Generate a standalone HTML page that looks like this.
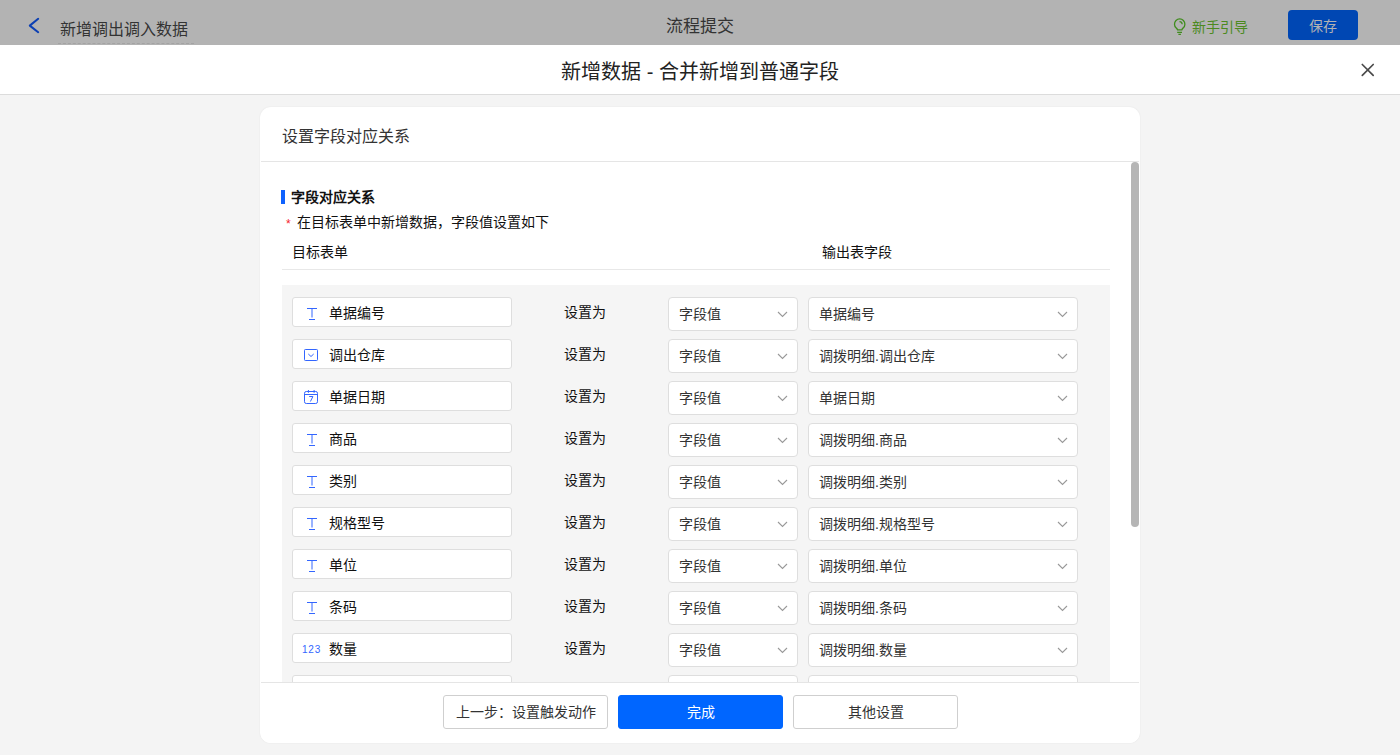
<!DOCTYPE html>
<html lang="zh-CN">
<head>
<meta charset="utf-8">
<style>
*{margin:0;padding:0;box-sizing:border-box;}
html,body{width:1400px;height:755px;overflow:hidden;background:#f4f4f4;font-family:"Liberation Sans",sans-serif;color:#333;}
.abs{position:absolute;}
#topbar{position:absolute;left:0;top:0;width:1400px;height:45px;background:#b3b3b3;}
#topbar .back{position:absolute;left:27px;top:16px;}
#topbar .name{position:absolute;left:60px;top:20px;font-size:16px;line-height:20px;color:#333;white-space:nowrap;}
#topbar .dash{position:absolute;left:58px;top:43px;width:136px;height:1px;border-top:1px dashed #a3a3a3;}
#topbar .mid{position:absolute;left:0;width:1400px;top:17px;text-align:center;font-size:17px;line-height:20px;color:#333;}
#topbar .guide{position:absolute;left:1192px;top:17px;font-size:14px;line-height:20px;color:#4c8a1f;white-space:nowrap;}
#topbar .save{position:absolute;left:1288px;top:10px;width:70px;height:30px;background:#0047b3;border-radius:4px;color:#b3b3b3;font-size:14px;line-height:32px;text-align:center;}
#mhead{position:absolute;left:0;top:45px;width:1400px;height:50px;background:#fff;border-bottom:1px solid #dcdcdc;}
#mhead .title{position:absolute;left:0;width:1400px;top:14px;text-align:center;font-size:20px;line-height:26px;color:#222;}
#mhead .close{position:absolute;left:1360px;top:17px;}
#card{position:absolute;left:260px;top:107px;width:880px;height:636px;background:#fff;border-radius:11px;overflow:hidden;box-shadow:0 0 2px rgba(0,0,0,0.07);}
#card .chead{position:absolute;left:1px;top:0;width:878px;height:55px;border-bottom:1px solid #e5e5e5;}
#card .chead span{position:absolute;left:21px;top:20px;font-size:16px;line-height:20px;color:#333;}
#scroll{position:absolute;left:0;top:55px;width:880px;height:520px;overflow:hidden;}
#thumb{position:absolute;left:871px;top:55px;width:8px;height:365px;background:#b5b5b5;border-radius:4px;}
.stitle{position:absolute;left:31px;top:27px;height:16px;font-size:14px;line-height:16px;font-weight:bold;color:#111;}
.sbar{position:absolute;left:21px;top:28px;width:4px;height:14px;background:#0f62fe;}
.note{position:absolute;left:26px;top:50px;font-size:14px;line-height:20px;color:#111;white-space:nowrap;}
.note i{font-style:normal;color:#f5222d;font-size:12px;margin-right:6px;position:relative;top:1px;}
.colh{position:absolute;top:80px;font-size:14px;line-height:20px;color:#111;}
.hline{position:absolute;left:22px;top:107px;width:828px;height:1px;background:#e8e8e8;}
#grid{position:absolute;left:22px;top:123px;width:828px;height:420px;background:#f5f5f5;}
.row{position:absolute;left:0;width:828px;height:34px;}
.fld{position:absolute;left:10px;top:0;width:220px;height:30px;background:#fff;border:1px solid #dedede;border-radius:3px;}
.fld .ic{position:absolute;left:10px;top:7px;width:16px;height:16px;}
.num{position:absolute;left:9px;top:10px;font-size:10px;line-height:12px;color:#3366ff;letter-spacing:0.8px;}
.fld .tx{position:absolute;left:36px;top:5px;font-size:14px;line-height:20px;color:#111;}
.setas{position:absolute;left:282px;top:5px;font-size:14px;line-height:20px;color:#111;}
.sel{position:absolute;top:0;height:34px;background:#fff;border:1px solid #dedede;border-radius:4px;}
.sel .tx{position:absolute;left:10px;top:6px;font-size:14px;line-height:20px;color:#333;white-space:nowrap;}
.sel svg{position:absolute;right:9px;top:13px;}
.s1{left:386px;width:130px;}
.s2{left:526px;width:270px;}
#footer{position:absolute;left:1px;top:575px;width:878px;height:61px;border-top:1px solid #e5e5e5;background:#fff;}
.btn{position:absolute;top:12px;width:165px;height:34px;border:1px solid #cfcfcf;border-radius:3px;font-size:14px;line-height:32px;text-align:center;color:#333;background:#fff;}
.btn.primary{background:#0066ff;border-color:#0066ff;color:#fff;}
</style>
</head>
<body>
<div id="topbar">
  <svg class="back" width="14" height="20" viewBox="0 0 14 20"><path d="M11.2 2.8 L2.8 9.6 L11.2 16.2" fill="none" stroke="#0b3fb3" stroke-width="2" stroke-linecap="round" stroke-linejoin="round"/></svg>
  <div class="name">新增调出调入数据</div>
  <div class="dash"></div>
  <div class="mid">流程提交</div>
  <svg style="position:absolute;left:1168px;top:12px" width="32" height="28" viewBox="0 0 32 28"><path d="M9.5 17.8c-.2-.9-.6-1.4-1.4-1.9a5.2 5.2 0 1 1 7.2 0c-.8.5-1.2 1-1.4 1.9z" fill="none" stroke="#3f8c1c" stroke-width="1.3" stroke-linejoin="round"/><path d="M11.5 9.7a2.8 2.8 0 0 1 2.7 2.5" fill="none" stroke="#3f8c1c" stroke-width="1.2"/><path d="M9.2 20.4h4.8M10.4 22.4h2.5" stroke="#3f8c1c" stroke-width="1.2"/></svg>
  <div class="guide">新手引导</div>
  <div class="save">保存</div>
</div>
<div id="mhead">
  <div class="title">新增数据 - 合并新增到普通字段</div>
  <svg class="close" width="16" height="16" viewBox="0 0 16 16"><path d="M2.3 2.5 L13.2 13.3 M13.2 2.5 L2.3 13.3" stroke="#4a4a4a" stroke-width="1.7" stroke-linecap="round"/></svg>
</div>
<div id="card">
  <div class="chead"><span>设置字段对应关系</span></div>
  <div id="scroll">
    <div class="sbar"></div><div class="stitle">字段对应关系</div>
    <div class="note"><i>*</i>在目标表单中新增数据，字段值设置如下</div>
    <div class="colh" style="left:32px">目标表单</div>
    <div class="colh" style="left:562px">输出表字段</div>
    <div class="hline"></div>
    <div id="grid">
<div class="row" style="top:12px"><div class="fld"><svg class="ic" width="16" height="16" viewBox="0 0 16 16"><path d="M4 3.5h10M9 3.5v9M6 14.5h6" fill="none" stroke="#3366ff" stroke-width="1"/></svg><span class="tx">单据编号</span></div><span class="setas">设置为</span><div class="sel s1"><span class="tx">字段值</span><svg width="11" height="7" viewBox="0 0 11 7"><path d="M1 1l4.5 4.5L10 1" fill="none" stroke="#999" stroke-width="1.1"/></svg></div><div class="sel s2"><span class="tx">单据编号</span><svg width="11" height="7" viewBox="0 0 11 7"><path d="M1 1l4.5 4.5L10 1" fill="none" stroke="#999" stroke-width="1.1"/></svg></div></div>
<div class="row" style="top:54px"><div class="fld"><svg class="ic" width="16" height="16" viewBox="0 0 16 16"><rect x="1.5" y="2.5" width="13" height="11" rx="0.8" fill="none" stroke="#3366ff" stroke-width="1"/><path d="M5.3 7l2.7 2.5 2.7-2.5" fill="none" stroke="#3366ff" stroke-width="1"/></svg><span class="tx">调出仓库</span></div><span class="setas">设置为</span><div class="sel s1"><span class="tx">字段值</span><svg width="11" height="7" viewBox="0 0 11 7"><path d="M1 1l4.5 4.5L10 1" fill="none" stroke="#999" stroke-width="1.1"/></svg></div><div class="sel s2"><span class="tx">调拨明细.调出仓库</span><svg width="11" height="7" viewBox="0 0 11 7"><path d="M1 1l4.5 4.5L10 1" fill="none" stroke="#999" stroke-width="1.1"/></svg></div></div>
<div class="row" style="top:96px"><div class="fld"><svg class="ic" width="16" height="16" viewBox="0 0 16 16"><rect x="1.5" y="2.5" width="13" height="12" rx="1.8" fill="none" stroke="#3366ff" stroke-width="1"/><path d="M1.5 5.5h13M5.4 1v2.8M11.1 1v2.8M6.2 7.5h3.7L7.4 12.5" fill="none" stroke="#3366ff" stroke-width="1"/></svg><span class="tx">单据日期</span></div><span class="setas">设置为</span><div class="sel s1"><span class="tx">字段值</span><svg width="11" height="7" viewBox="0 0 11 7"><path d="M1 1l4.5 4.5L10 1" fill="none" stroke="#999" stroke-width="1.1"/></svg></div><div class="sel s2"><span class="tx">单据日期</span><svg width="11" height="7" viewBox="0 0 11 7"><path d="M1 1l4.5 4.5L10 1" fill="none" stroke="#999" stroke-width="1.1"/></svg></div></div>
<div class="row" style="top:138px"><div class="fld"><svg class="ic" width="16" height="16" viewBox="0 0 16 16"><path d="M4 3.5h10M9 3.5v9M6 14.5h6" fill="none" stroke="#3366ff" stroke-width="1"/></svg><span class="tx">商品</span></div><span class="setas">设置为</span><div class="sel s1"><span class="tx">字段值</span><svg width="11" height="7" viewBox="0 0 11 7"><path d="M1 1l4.5 4.5L10 1" fill="none" stroke="#999" stroke-width="1.1"/></svg></div><div class="sel s2"><span class="tx">调拨明细.商品</span><svg width="11" height="7" viewBox="0 0 11 7"><path d="M1 1l4.5 4.5L10 1" fill="none" stroke="#999" stroke-width="1.1"/></svg></div></div>
<div class="row" style="top:180px"><div class="fld"><svg class="ic" width="16" height="16" viewBox="0 0 16 16"><path d="M4 3.5h10M9 3.5v9M6 14.5h6" fill="none" stroke="#3366ff" stroke-width="1"/></svg><span class="tx">类别</span></div><span class="setas">设置为</span><div class="sel s1"><span class="tx">字段值</span><svg width="11" height="7" viewBox="0 0 11 7"><path d="M1 1l4.5 4.5L10 1" fill="none" stroke="#999" stroke-width="1.1"/></svg></div><div class="sel s2"><span class="tx">调拨明细.类别</span><svg width="11" height="7" viewBox="0 0 11 7"><path d="M1 1l4.5 4.5L10 1" fill="none" stroke="#999" stroke-width="1.1"/></svg></div></div>
<div class="row" style="top:222px"><div class="fld"><svg class="ic" width="16" height="16" viewBox="0 0 16 16"><path d="M4 3.5h10M9 3.5v9M6 14.5h6" fill="none" stroke="#3366ff" stroke-width="1"/></svg><span class="tx">规格型号</span></div><span class="setas">设置为</span><div class="sel s1"><span class="tx">字段值</span><svg width="11" height="7" viewBox="0 0 11 7"><path d="M1 1l4.5 4.5L10 1" fill="none" stroke="#999" stroke-width="1.1"/></svg></div><div class="sel s2"><span class="tx">调拨明细.规格型号</span><svg width="11" height="7" viewBox="0 0 11 7"><path d="M1 1l4.5 4.5L10 1" fill="none" stroke="#999" stroke-width="1.1"/></svg></div></div>
<div class="row" style="top:264px"><div class="fld"><svg class="ic" width="16" height="16" viewBox="0 0 16 16"><path d="M4 3.5h10M9 3.5v9M6 14.5h6" fill="none" stroke="#3366ff" stroke-width="1"/></svg><span class="tx">单位</span></div><span class="setas">设置为</span><div class="sel s1"><span class="tx">字段值</span><svg width="11" height="7" viewBox="0 0 11 7"><path d="M1 1l4.5 4.5L10 1" fill="none" stroke="#999" stroke-width="1.1"/></svg></div><div class="sel s2"><span class="tx">调拨明细.单位</span><svg width="11" height="7" viewBox="0 0 11 7"><path d="M1 1l4.5 4.5L10 1" fill="none" stroke="#999" stroke-width="1.1"/></svg></div></div>
<div class="row" style="top:306px"><div class="fld"><svg class="ic" width="16" height="16" viewBox="0 0 16 16"><path d="M4 3.5h10M9 3.5v9M6 14.5h6" fill="none" stroke="#3366ff" stroke-width="1"/></svg><span class="tx">条码</span></div><span class="setas">设置为</span><div class="sel s1"><span class="tx">字段值</span><svg width="11" height="7" viewBox="0 0 11 7"><path d="M1 1l4.5 4.5L10 1" fill="none" stroke="#999" stroke-width="1.1"/></svg></div><div class="sel s2"><span class="tx">调拨明细.条码</span><svg width="11" height="7" viewBox="0 0 11 7"><path d="M1 1l4.5 4.5L10 1" fill="none" stroke="#999" stroke-width="1.1"/></svg></div></div>
<div class="row" style="top:348px"><div class="fld"><span class="num">123</span><span class="tx">数量</span></div><span class="setas">设置为</span><div class="sel s1"><span class="tx">字段值</span><svg width="11" height="7" viewBox="0 0 11 7"><path d="M1 1l4.5 4.5L10 1" fill="none" stroke="#999" stroke-width="1.1"/></svg></div><div class="sel s2"><span class="tx">调拨明细.数量</span><svg width="11" height="7" viewBox="0 0 11 7"><path d="M1 1l4.5 4.5L10 1" fill="none" stroke="#999" stroke-width="1.1"/></svg></div></div>
<div class="row" style="top:390px"><div class="fld"><span class="tx"></span></div><div class="sel s1"><span class="tx"></span></div><div class="sel s2"><span class="tx"></span></div></div>
    </div>
  </div>
  <div id="thumb"></div>
  <div id="footer">
    <div class="btn" style="left:182px">上一步：设置触发动作</div>
    <div class="btn primary" style="left:357px">完成</div>
    <div class="btn" style="left:532px">其他设置</div>
  </div>
</div>
</body>
</html>
